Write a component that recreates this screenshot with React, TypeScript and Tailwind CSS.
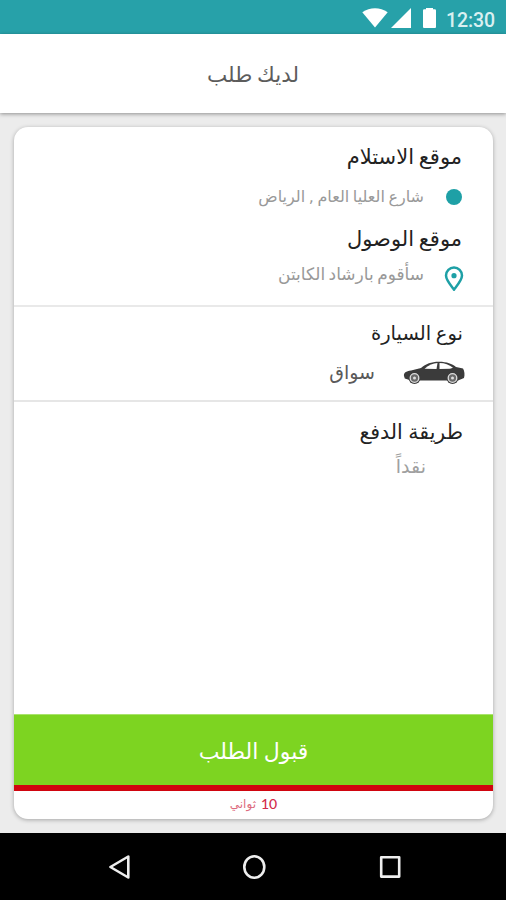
import type { ReactNode } from "react";

const arabic = "font-['DejaVu_Sans',sans-serif]";

function Heading({ children, className }: { children: ReactNode; className: string }) {
  return (
    <h2 className={`flex h-[30px] items-center whitespace-nowrap font-normal text-[#222222] ${className}`}>
      {children}
    </h2>
  );
}

function StatusBar() {
  return (
    <div dir="ltr" className="flex h-[34px] items-center justify-end bg-[#27a1a9] pr-[11px] text-white">
      <svg className="mt-px h-5 w-[26px]" viewBox="0 0 26 20" fill="currentColor">
        <path d="M0.3 4.2C8 -1 18 -1 25.7 4.2L13 19.5Z" />
      </svg>
      <svg className="ml-[3px] mt-px h-5 w-5" viewBox="0 0 20 20" fill="currentColor">
        <path d="M0 20L20 0V20Z" />
      </svg>
      <svg className="ml-3 mt-px h-5 w-[13px]" viewBox="0 0 13 20" fill="currentColor">
        <path d="M3 0h7v1.3h1.8Q13 1.3 13 2.5V19Q13 20 12 20H1Q0 20 0 19V2.5Q0 1.3 1.2 1.3H3Z" />
      </svg>
      <span className="ml-[10px] mt-[7px] font-[Roboto,sans-serif] text-[19.5px] font-medium leading-none tracking-[-0.1px] text-[#d9f0f1]">12:30</span>
    </div>
  );
}

function CarIcon() {
  return (
    <svg className="h-[25px] w-[62px]" viewBox="0 0 62 25">
      <path
        d="M1 16C0.5 13 3 11 8 10.5L18 8C23 4 28 1.8 36 1.8C44 1.8 49 4 53 7L60 8.5C61.5 11 62 15 61 18L55 20.5H8L1.8 18.5Z"
        fill="#3b3b3b"
      />
      <path d="M21.5 8.8C26 5 30 3.3 34.5 3.1L33.5 9Z" fill="#fff" />
      <path d="M36.5 3.1C42 3.1 46 4.8 50 7.8L47 8.8L36.5 9Z" fill="#fff" />
      <circle cx="11.5" cy="18" r="6" fill="#3b3b3b" />
      <circle cx="11.5" cy="18" r="4.3" fill="#6a6a6a" stroke="#ddd" strokeWidth="1.3" />
      <circle cx="11.5" cy="18" r="1.5" fill="#ddd" />
      <circle cx="49.5" cy="18" r="6" fill="#3b3b3b" />
      <circle cx="49.5" cy="18" r="4.3" fill="#6a6a6a" stroke="#ddd" strokeWidth="1.3" />
      <circle cx="49.5" cy="18" r="1.5" fill="#ddd" />
    </svg>
  );
}

function NavBar() {
  return (
    <div dir="ltr" className="flex h-[67px] items-center bg-black pl-[107px] text-[#eeeeee]">
      <svg className="h-7 w-6" viewBox="0 0 24 28" fill="none" stroke="currentColor" strokeWidth="2.6" strokeLinejoin="round">
        <path d="M21.3 3.5V24.5L3.4 14Z" />
      </svg>
      <svg className="ml-[111px] h-7 w-6" viewBox="0 0 24 28" fill="none" stroke="currentColor" strokeWidth="2.6">
        <ellipse cx="12.3" cy="14" rx="10" ry="10.7" />
      </svg>
      <svg className="ml-[112px] h-7 w-6" viewBox="0 0 24 28" fill="none" stroke="currentColor" strokeWidth="2.6" strokeLinejoin="round">
        <rect x="3.2" y="4.2" width="18" height="19.4" />
      </svg>
    </div>
  );
}

export default function App() {
  return (
    <div dir="rtl" className={`flex h-[900px] w-[506px] flex-col overflow-hidden bg-[#ececec] ${arabic}`}>
      <StatusBar />
      <header className="z-10 flex h-[79px] shrink-0 items-center justify-center bg-white pt-[3px] shadow-[0_1px_4px_rgba(0,0,0,0.4)]">
        <h1 className="whitespace-nowrap text-[21.5px] font-normal text-[#5c5c5c] [word-spacing:-2px]">لديك طلب</h1>
      </header>

      <main className="flex min-h-0 flex-1 py-[14px] pr-[13px]">
        <div className="flex w-[479px] shrink-0 flex-col overflow-hidden rounded-[14px] bg-white shadow-[0_1px_4px_rgba(0,0,0,0.3)]">
          <section className="h-[180px] shrink-0 border-b-2 border-[#e9e9e9] pr-[31px] pt-[16px]">
            <Heading className="text-[21px] [word-spacing:-2px]">موقع الاستلام</Heading>
            <div className="mt-[9px] flex h-[30px] items-center text-[#999999]">
              <span className="h-4 w-4 rounded-full bg-[#1ea0a6]" />
              <span className="mr-[22px] whitespace-nowrap text-[16px] [word-spacing:-1.5px]">شارع العليا العام , الرياض</span>
            </div>
            <Heading className="mt-[13px] text-[21px] [word-spacing:-2px]">موقع الوصول</Heading>
            <div className="mt-[5px] flex h-[30px] items-center text-[#999999]">
              <svg className="-mr-[2px] mt-[7px] h-[26px] w-5" viewBox="0 0 20 26" fill="none">
                <path d="M10 23.7C6 18.5 2 14 2 9.6A8 8 0 0 1 18 9.6C18 14 14 18.5 10 23.7Z" stroke="#1ea0a6" strokeWidth="2.5" strokeLinejoin="round" />
                <circle cx="10" cy="9.7" r="2.6" fill="#1ea0a6" />
              </svg>
              <span className="mr-[20px] whitespace-nowrap text-[17px] [word-spacing:-2px]">سأقوم بارشاد الكابتن</span>
            </div>
          </section>

          <section className="h-[95px] shrink-0 border-b-2 border-[#e6e6e6] pr-[30px] pt-[12px]">
            <Heading className="text-[19.5px] [word-spacing:-1.5px]">نوع السيارة</Heading>
            <div className="-mr-[2px] mt-[8px] flex h-[30px] items-center text-[#5a5a5a]">
              <CarIcon />
              <span className="mr-[28px] whitespace-nowrap text-[19px]">سواق</span>
            </div>
          </section>

          <section className="flex-1 pr-[30px] pt-[15px]">
            <Heading className="text-[20.5px] [word-spacing:-1px]">طريقة الدفع</Heading>
            <p className="mr-[37px] mt-[4px] flex h-[30px] items-center text-[19px] text-[#a0a0a0]">نقداً</p>
          </section>

          <button className="flex h-[71px] shrink-0 items-center justify-center border-t border-[#a9e36c] bg-[#7dd421] pt-[2px] text-[22px] text-white [word-spacing:-1.5px]">
            قبول الطلب
          </button>
          <div className="h-[6px] shrink-0 bg-[#d0050f]" />
          <div className="flex h-7 shrink-0 items-center justify-center gap-[5px] pb-[3px] text-[#d22b49]">
            <span className="font-[Lato,sans-serif] text-[14px] font-medium">10</span>
            <span className="text-[12px] text-[#dd6b7e]">ثواني</span>
          </div>
        </div>
      </main>
      <NavBar />
    </div>
  );
}
